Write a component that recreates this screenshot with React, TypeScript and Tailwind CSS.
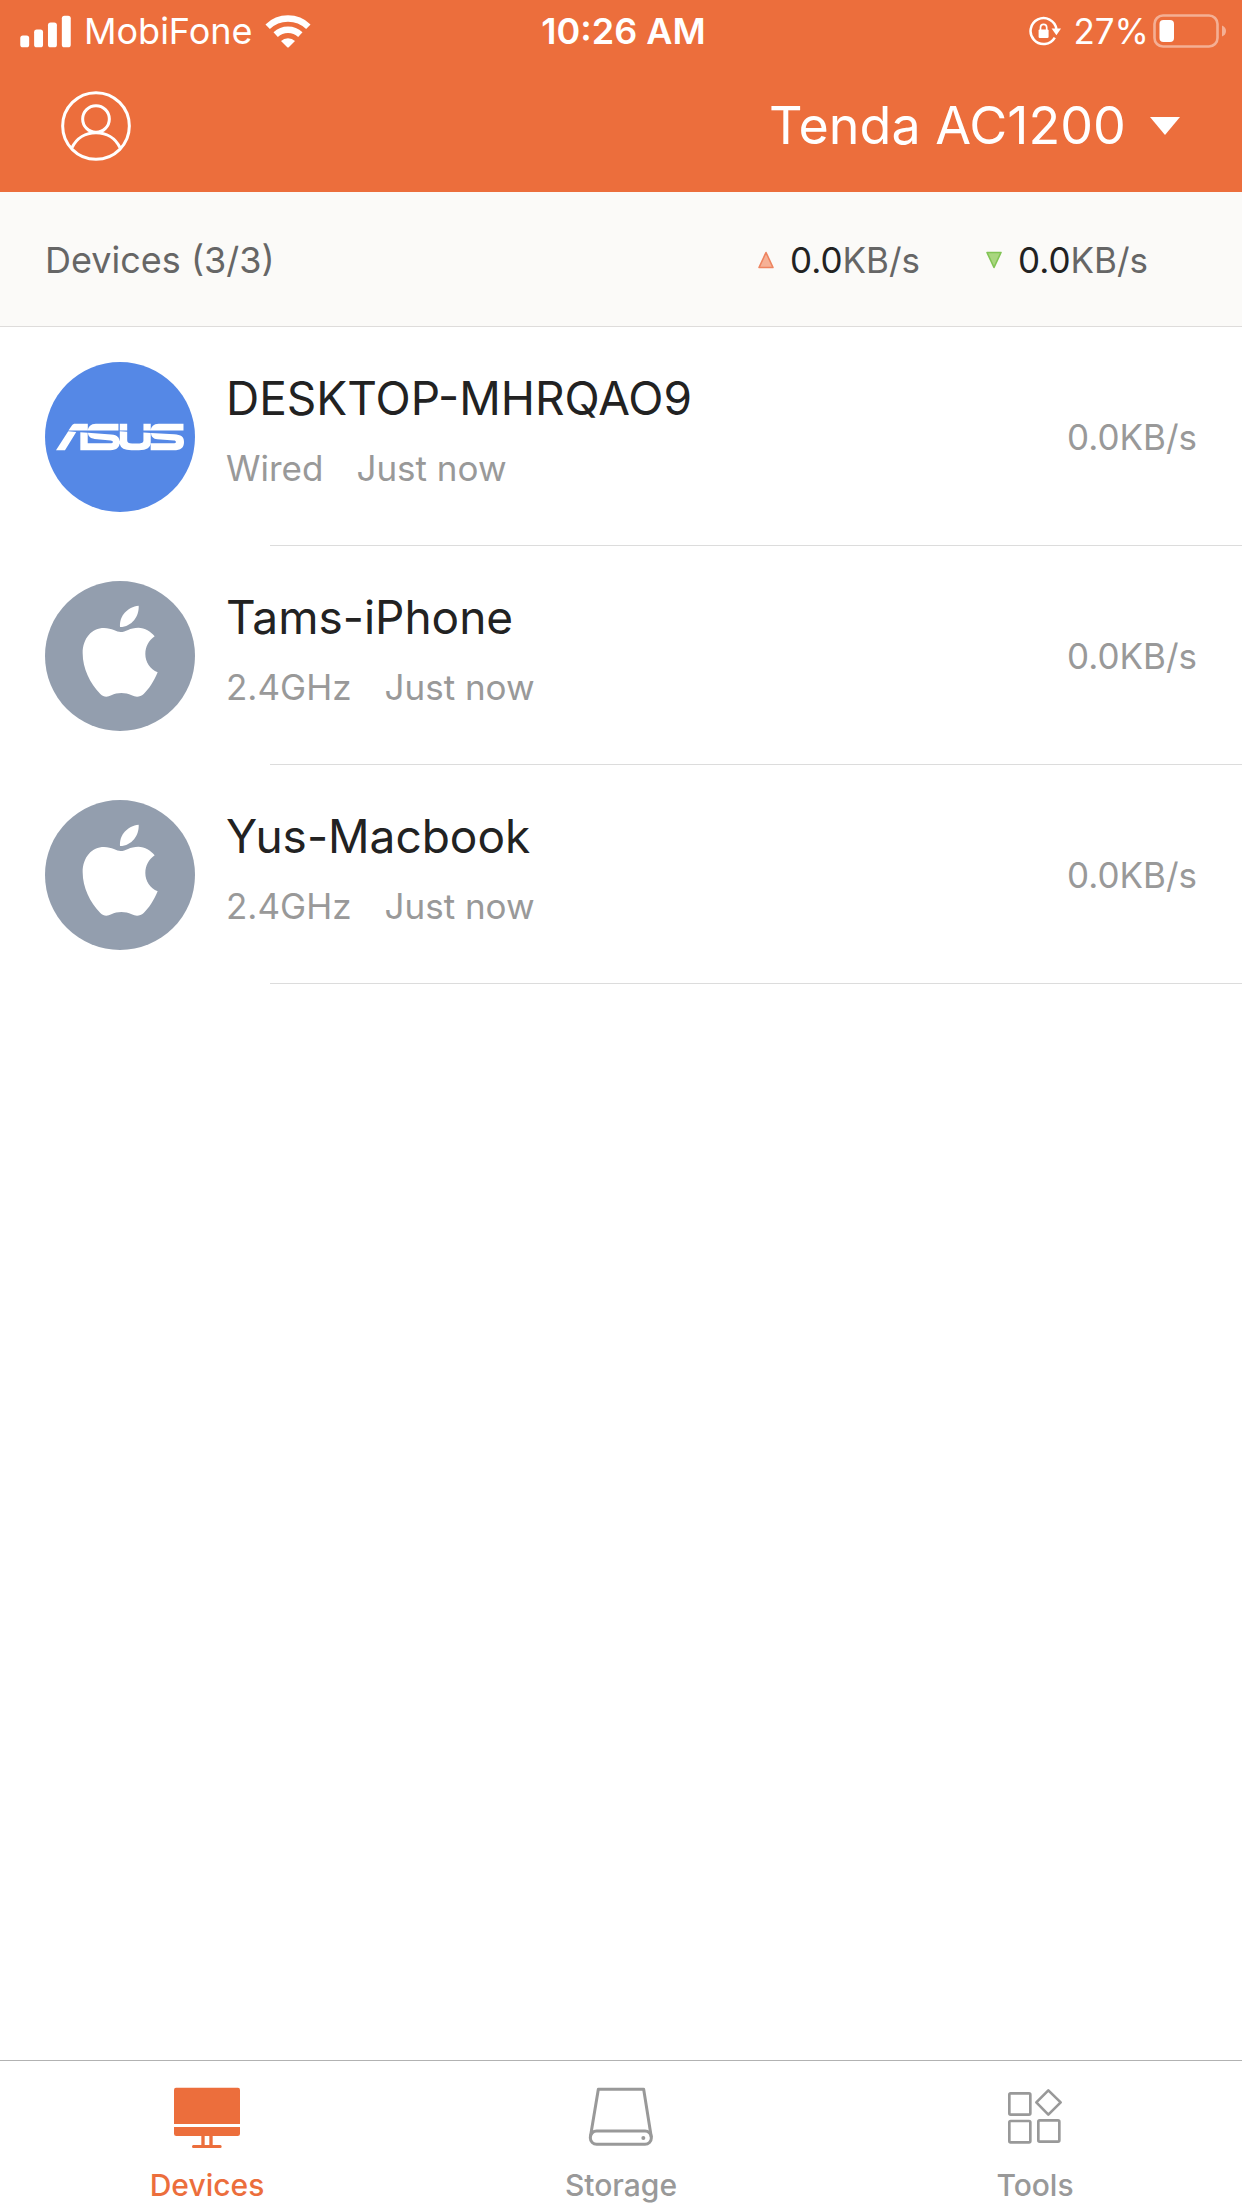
import { useState } from 'react';
import type { ReactNode } from 'react';
import { SiAsus } from 'react-icons/si';

type Brand = 'asus' | 'apple';

const devices: { name: string; link: string; seen: string; speed: string; brand: Brand }[] = [
  { name: 'DESKTOP-MHRQAO9', link: 'Wired', seen: 'Just now', speed: '0.0KB/s', brand: 'asus' },
  { name: 'Tams-iPhone', link: '2.4GHz', seen: 'Just now', speed: '0.0KB/s', brand: 'apple' },
  { name: 'Yus-Macbook', link: '2.4GHz', seen: 'Just now', speed: '0.0KB/s', brand: 'apple' },
];

const SignalIcon = () => (
  <svg viewBox="60 40 156 100" className="h-[33px] w-[52px]" fill="currentColor" aria-hidden="true">
    <rect x="60" y="102" width="27" height="36" rx="8" />
    <rect x="102" y="84" width="27" height="54" rx="8" />
    <rect x="144" y="63" width="27" height="75" rx="8" />
    <rect x="186" y="42" width="27" height="96" rx="8" />
  </svg>
);

const WifiIcon = () => (
  <svg viewBox="789 37 138 102" className="h-[34px] w-[46px]" aria-hidden="true">
    <g fill="none" stroke="currentColor" strokeWidth="19">
      <path d="M797 75 A88 88 0 0 1 919 75" />
      <path d="M821 99 A54 54 0 0 1 895 99" />
    </g>
    <path d="M837 118 A30 30 0 0 1 879 118 L861 136 Q858 139 855 136 Z" fill="currentColor" />
  </svg>
);

const RotationLockIcon = () => (
  <svg viewBox="0 0 32 32" className="size-8" fill="none" stroke="currentColor" aria-hidden="true">
    <path d="M27.4 14 A13 13 0 1 0 25.8 22.6" strokeWidth="2.5" />
    <path d="M22.6 13.4 H32 L27.4 20.2 Z" fill="currentColor" stroke="none" />
    <rect x="9.6" y="14.4" width="10" height="8.6" rx="1.2" fill="currentColor" stroke="none" />
    <path d="M11.5 15 V12.4 A3.1 3.1 0 0 1 17.7 12.4 V15" strokeWidth="1.7" />
  </svg>
);

const BatteryIcon = () => (
  <svg viewBox="0 0 74 34" className="h-[34px] w-[74px]" aria-hidden="true">
    <rect x="1.5" y="1.5" width="63" height="31" rx="8.5" fill="none" stroke="currentColor" strokeWidth="2.6" opacity="0.45" />
    <path d="M69 11.5 Q73 13 73 17 Q73 21 69 22.5 Z" fill="currentColor" opacity="0.45" />
    <rect x="6.5" y="6" width="14.5" height="22" rx="4" fill="currentColor" />
  </svg>
);

const ProfileIcon = () => (
  <svg viewBox="180 270 216 216" className="size-[72px]" fill="none" stroke="currentColor" strokeWidth="9" aria-hidden="true">
    <circle cx="288" cy="378" r="100" />
    <circle cx="288" cy="357" r="40" />
    <path d="M216 443 C230 413 258 398 288 398 C318 398 346 413 360 443" />
  </svg>
);

const AppleLogo = () => (
  <svg viewBox="45 33 450 450" className="size-[150px]" fill="currentColor" aria-hidden="true">
    <path d="M272 186 C286 186 300 173 325 173 C345 173 362 184 374 199 C356 212 346 230 346 252 C346 276 360 297 383 307 C372 334 356 358 341 372 C330 382 317 382 305 376 C286 367 262 367 244 376 C232 382 221 382 211 372 C180 340 158 296 158 250 C158 204 186 174 222 174 C246 174 260 186 272 186 Z" />
    <path d="M270 171 C267 138 292 111 326 107 C328 138 306 170 270 171 Z" />
  </svg>
);

const DevicesIcon = () => (
  <svg viewBox="513 135 216 192" className="h-16 w-[72px]" fill="currentColor" aria-hidden="true">
    <path d="M528 143 H714 Q720 143 720 150 V252 H522 V150 Q522 143 528 143 Z" />
    <path d="M522 261 H720 V281 Q720 288 713 288 H529 Q522 288 522 281 Z" />
    <path d="M604 288 H614 V315 H628 V288 H638 V315 H661 Q665 315 665 319.500 Q665 324 661 324 H580 Q576 324 576 319.500 Q576 315 580 315 H604 Z" />
  </svg>
);

const StorageIcon = () => (
  <svg viewBox="255 135 216 192" className="h-16 w-[72px]" fill="none" stroke="currentColor" strokeWidth="9" strokeLinejoin="round" aria-hidden="true">
    <rect x="271" y="273" width="183" height="40" rx="19" />
    <path d="M271 292 L295 148 H431 L454 292" />
    <circle cx="430" cy="294" r="6" fill="currentColor" stroke="none" />
  </svg>
);

const ToolsIcon = () => (
  <svg viewBox="177 135 216 192" className="h-16 w-[72px]" fill="none" stroke="currentColor" strokeWidth="8" strokeLinejoin="round" aria-hidden="true">
    <rect x="208" y="160" width="63" height="64" rx="4" />
    <rect x="208" y="243" width="63" height="64" rx="4" />
    <rect x="295" y="241" width="63" height="64" rx="4" />
    <path d="M325 151 L362 187 L325 224 L289 187 Z" />
  </svg>
);

const tabs: { id: string; label: string; icon: ReactNode }[] = [
  { id: 'devices', label: 'Devices', icon: <DevicesIcon /> },
  { id: 'storage', label: 'Storage', icon: <StorageIcon /> },
  { id: 'tools', label: 'Tools', icon: <ToolsIcon /> },
];

const StatusBar = () => (
  <div className="grid h-[62px] grid-cols-[1fr_auto_1fr] items-center pr-[15px] pl-5 text-[36px]">
    <div className="flex items-center gap-3">
      <SignalIcon />
      <span>MobiFone</span>
      <WifiIcon />
    </div>
    <span className="font-semibold">10:26 AM</span>
    <div className="flex items-center justify-end">
      <RotationLockIcon />
      <span className="mr-1 ml-3 text-[35px]">27%</span>
      <BatteryIcon />
    </div>
  </div>
);

const Rate = ({ up, value }: { up?: boolean; value: string }) => (
  <div className="flex items-center gap-4">
    <svg viewBox="0 0 16 18" className="h-[18px] w-4" strokeWidth="1.6" strokeLinejoin="round" aria-hidden="true">
      {up ? (
        <path d="M8 1.500 L15 16.500 H1 Z" fill="#f6b196" stroke="#ee8460" />
      ) : (
        <path d="M8 16.500 L15 1.500 H1 Z" fill="#a9d67f" stroke="#82c455" />
      )}
    </svg>
    <span className="text-[35px] text-[#666]">
      <span className="text-[#222]">{value}</span>KB/s
    </span>
  </div>
);

const DeviceRow = ({ device }: { device: (typeof devices)[number] }) => (
  <li>
    <div className="flex h-[218px] items-center px-[45px] pt-0.5">
      {device.brand === 'asus' ? (
        <div className="flex size-[150px] items-center justify-center rounded-full bg-[#5588e6] text-white">
          <SiAsus size={128} />
        </div>
      ) : (
        <div className="size-[150px] rounded-full bg-[#939eae] text-white">
          <AppleLogo />
        </div>
      )}
      <div className="ml-[31px] flex-1 self-start pt-[38px]">
        <h2 className="text-[46px] leading-[62px] text-[#222]">{device.name}</h2>
        <p className="mt-4 flex gap-[33px] text-[35px] leading-[46px] text-[#999]">
          <span>{device.link}</span>
          <span>{device.seen}</span>
        </p>
      </div>
      <span className="text-[35px] text-[#999]">{device.speed}</span>
    </div>
    <div className="ml-[270px] border-b border-[#dcdcdc]" />
  </li>
);

const App = () => {
  const [activeTab, setActiveTab] = useState('devices');

  return (
    <div className="flex min-h-screen flex-col bg-white font-['Inter',sans-serif]">
      <header className="bg-[#ec6e3c] pb-0.5 text-white">
        <StatusBar />
        <div className="flex h-32 items-center justify-between pr-[62px] pl-[60px]">
          <button type="button" aria-label="Account">
            <ProfileIcon />
          </button>
          <label className="flex items-center gap-6">
            <select aria-label="Router" className="appearance-none bg-transparent text-[52px] leading-[64px]">
              <option>Tenda AC1200</option>
            </select>
            <svg viewBox="0 0 30 18" className="h-[18px] w-[30px]" fill="currentColor" aria-hidden="true">
              <path d="M0 0 H30 L15 18 Z" />
            </svg>
          </label>
        </div>
      </header>

      <div className="flex h-[135px] items-center justify-between border-b border-[#dedcdb] bg-[#fbfaf8] pt-0.5 pr-[94px] pl-[45px]">
        <h1 className="text-[36px] text-[#666]">Devices (3/3)</h1>
        <div className="flex gap-[66px]">
          <Rate up value="0.0" />
          <Rate value="0.0" />
        </div>
      </div>

      {/* Connected devices */}
      <ul>
        {devices.map((device) => (
          <DeviceRow key={device.name} device={device} />
        ))}
      </ul>

      {/* Bottom tabs */}
      <nav className="mt-auto grid grid-cols-3 border-t border-[#b2b2b2] pb-0.5">
        {tabs.map((tab) => (
          <button
            key={tab.id}
            type="button"
            onClick={() => setActiveTab(tab.id)}
            className={`flex flex-col items-center gap-[15px] pt-6 ${activeTab === tab.id ? 'text-[#ec6e3c]' : 'text-[#999]'}`}
          >
            {tab.icon}
            <span className="text-[30px] leading-[42px] font-medium">{tab.label}</span>
          </button>
        ))}
      </nav>
    </div>
  );
};

export default App;
